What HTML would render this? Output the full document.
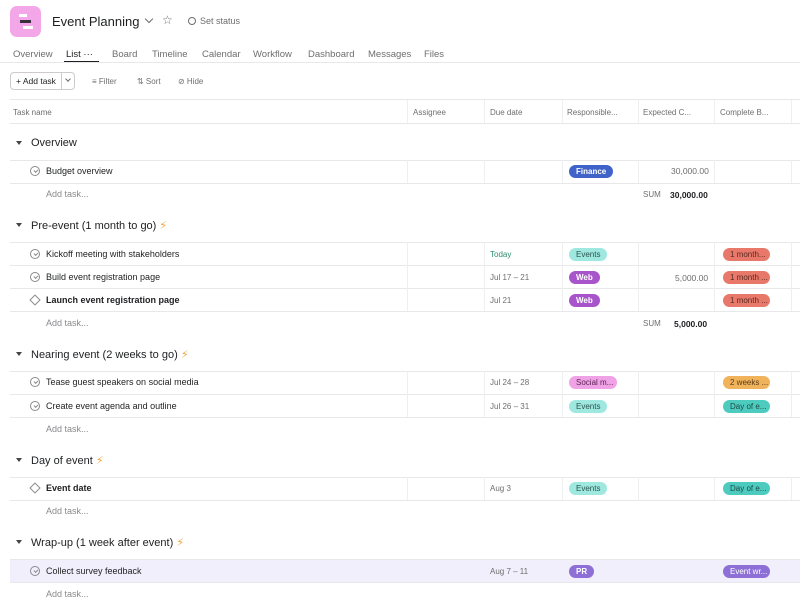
<!DOCTYPE html>
<html><head><meta charset="utf-8"><style>
*{box-sizing:border-box;margin:0;padding:0}
body{width:800px;height:600px;overflow:hidden;background:#fff;font-family:"Liberation Sans",sans-serif;color:#1e1f21;position:relative}
.a{position:absolute}
.t{font-size:9px;color:#1e1f21;white-space:nowrap}
.hl{position:absolute;height:1px;background:#e8e8ea}
.vl{position:absolute;width:1px;background:#efeff1}
.pill{position:absolute;height:13px;border-radius:7px;font-size:8px;line-height:13px;padding:0 7px;white-space:nowrap;font-weight:bold}
.chk{position:absolute;width:10px;height:10px;border:1px solid #8a8a8e;border-radius:50%}
.chk:after{content:"";position:absolute;left:2.5px;top:2px;width:3px;height:2px;border-left:1px solid #8a8a8e;border-bottom:1px solid #8a8a8e;transform:rotate(-45deg)}
.dia{position:absolute;width:8px;height:8px;border:1px solid #8a8a8e;transform:rotate(45deg)}
.sec{position:absolute;left:31px;font-size:11px;color:#1e1f21}
.tri{position:absolute;left:16px;width:0;height:0;border-left:3.5px solid transparent;border-right:3.5px solid transparent;border-top:4px solid #444}
.add{position:absolute;left:46px;font-size:9px;color:#8a8a8e}
.bolt{color:#f1a33b;font-size:11px;font-family:"DejaVu Sans",sans-serif}
.g{color:#6d6e6f}
</style></head><body>
<div class="a" style="left:10px;top:6px;width:31px;height:31px;border-radius:7px;background:#f4a7e8"></div>
<div class="a" style="left:19px;top:14px;width:8px;height:3px;background:#fff"></div>
<div class="a" style="left:20px;top:20px;width:11px;height:3px;background:#3a2f3d"></div>
<div class="a" style="left:23px;top:26px;width:10px;height:3px;background:#fff"></div>
<div class="a" style="left:52px;top:14px;font-size:13px">Event Planning</div>
<div class="a g" style="left:146px;top:16px;width:6px;height:6px;border-right:1px solid #6d6e6f;border-bottom:1px solid #6d6e6f;transform:rotate(45deg)"></div>
<div class="a g" style="left:162px;top:13px;font-size:12px;font-family:'DejaVu Sans',sans-serif">☆</div>
<div class="a" style="left:188px;top:17px;width:8px;height:8px;border:1px solid #6d6e6f;border-radius:50%"></div>
<div class="a g" style="left:200px;top:16px;font-size:9px">Set status</div>
<div class="a t g" style="left:13px;top:49px;font-size:9.5px">Overview</div>
<div class="a t" style="left:66px;top:49px;font-size:9.5px">List ···</div>
<div class="a" style="left:64px;top:61px;width:35px;height:1.5px;background:#1e1f21"></div>
<div class="a t g" style="left:112px;top:49px;font-size:9.5px">Board</div>
<div class="a t g" style="left:152px;top:49px;font-size:9.5px">Timeline</div>
<div class="a t g" style="left:202px;top:49px;font-size:9.5px">Calendar</div>
<div class="a t g" style="left:253px;top:49px;font-size:9.5px">Workflow</div>
<div class="a t g" style="left:308px;top:49px;font-size:9.5px">Dashboard</div>
<div class="a t g" style="left:368px;top:49px;font-size:9.5px">Messages</div>
<div class="a t g" style="left:424px;top:49px;font-size:9.5px">Files</div>
<div class="hl" style="left:0;top:62px;width:800px"></div>
<div class="a" style="left:10px;top:72px;width:65px;height:18px;border:1px solid #cfcbcb;border-radius:4px"></div>
<div class="vl" style="left:61px;top:73px;height:16px;background:#cfcbcb"></div>
<div class="a t" style="left:16px;top:76px;font-size:8.5px">+ Add task</div>
<div class="a" style="left:66px;top:77px;width:4px;height:4px;border-right:1px solid #6d6e6f;border-bottom:1px solid #6d6e6f;transform:rotate(45deg)"></div>
<div class="a t g" style="left:92px;top:77px;font-size:8px">≡ Filter</div>
<div class="a t g" style="left:137px;top:77px;font-size:8px">⇅ Sort</div>
<div class="a t g" style="left:178px;top:77px;font-size:8px">⊘ Hide</div>
<div class="hl" style="left:10px;top:99px;width:790px"></div>
<div class="hl" style="left:10px;top:123px;width:790px"></div>
<div class="a t g" style="left:13px;top:108px;font-size:8px">Task name</div>
<div class="a t g" style="left:413px;top:108px;font-size:8px">Assignee</div>
<div class="a t g" style="left:490px;top:108px;font-size:8px">Due date</div>
<div class="a t g" style="left:567px;top:108px;font-size:8px">Responsible...</div>
<div class="a t g" style="left:643px;top:108px;font-size:8px">Expected C...</div>
<div class="a t g" style="left:720px;top:108px;font-size:8px">Complete B...</div>
<div class="vl" style="left:407px;top:100px;height:23px"></div><div class="vl" style="left:484px;top:100px;height:23px"></div><div class="vl" style="left:562px;top:100px;height:23px"></div><div class="vl" style="left:638px;top:100px;height:23px"></div><div class="vl" style="left:714px;top:100px;height:23px"></div><div class="vl" style="left:791px;top:100px;height:23px"></div>

<div class="tri" style="top:141px"></div><div class="sec" style="top:137px">Overview</div>
<div class="tri" style="top:223px"></div><div class="sec" style="top:219px">Pre-event (1 month to go) <span class="bolt">⚡</span></div>
<div class="tri" style="top:352px"></div><div class="sec" style="top:348px">Nearing event (2 weeks to go) <span class="bolt">⚡</span></div>
<div class="tri" style="top:458px"></div><div class="sec" style="top:454px">Day of event <span class="bolt">⚡</span></div>
<div class="tri" style="top:540px"></div><div class="sec" style="top:536px">Wrap-up (1 week after event) <span class="bolt">⚡</span></div>

<div class="a" style="left:10px;top:559px;width:790px;height:23px;background:#f1effb"></div>

<div class="hl" style="left:10px;top:160px;width:790px"></div><div class="hl" style="left:10px;top:183px;width:790px"></div>
<div class="hl" style="left:10px;top:242px;width:790px"></div><div class="hl" style="left:10px;top:265px;width:790px"></div><div class="hl" style="left:10px;top:288px;width:790px"></div><div class="hl" style="left:10px;top:311px;width:790px"></div>
<div class="hl" style="left:10px;top:371px;width:790px"></div><div class="hl" style="left:10px;top:394px;width:790px"></div><div class="hl" style="left:10px;top:417px;width:790px"></div>
<div class="hl" style="left:10px;top:477px;width:790px"></div><div class="hl" style="left:10px;top:500px;width:790px"></div>
<div class="hl" style="left:10px;top:559px;width:790px"></div><div class="hl" style="left:10px;top:582px;width:790px"></div>

<div class="vl" style="left:407px;top:160px;height:23px"></div><div class="vl" style="left:484px;top:160px;height:23px"></div><div class="vl" style="left:562px;top:160px;height:23px"></div><div class="vl" style="left:638px;top:160px;height:23px"></div><div class="vl" style="left:714px;top:160px;height:23px"></div><div class="vl" style="left:791px;top:160px;height:23px"></div>
<div class="vl" style="left:407px;top:242px;height:69px"></div><div class="vl" style="left:484px;top:242px;height:69px"></div><div class="vl" style="left:562px;top:242px;height:69px"></div><div class="vl" style="left:638px;top:242px;height:69px"></div><div class="vl" style="left:714px;top:242px;height:69px"></div><div class="vl" style="left:791px;top:242px;height:69px"></div>
<div class="vl" style="left:407px;top:371px;height:46px"></div><div class="vl" style="left:484px;top:371px;height:46px"></div><div class="vl" style="left:562px;top:371px;height:46px"></div><div class="vl" style="left:638px;top:371px;height:46px"></div><div class="vl" style="left:714px;top:371px;height:46px"></div><div class="vl" style="left:791px;top:371px;height:46px"></div>
<div class="vl" style="left:407px;top:477px;height:23px"></div><div class="vl" style="left:484px;top:477px;height:23px"></div><div class="vl" style="left:562px;top:477px;height:23px"></div><div class="vl" style="left:638px;top:477px;height:23px"></div><div class="vl" style="left:714px;top:477px;height:23px"></div><div class="vl" style="left:791px;top:477px;height:23px"></div>

<div class="chk" style="left:30px;top:166px"></div><div class="a t" style="left:46px;top:166px">Budget overview</div>
<div class="add" style="top:189px">Add task...</div>
<div class="pill" style="left:569px;top:165px;background:#3f63c8;color:#fff">Finance</div>
<div class="a t g" style="left:671px;top:166px;font-size:8.5px">30,000.00</div>
<div class="a t g" style="left:643px;top:190px;font-size:8px">SUM</div>
<div class="a t" style="left:670px;top:190px;font-size:8.5px;font-weight:bold">30,000.00</div>

<div class="chk" style="left:30px;top:249px"></div><div class="a t" style="left:46px;top:249px">Kickoff meeting with stakeholders</div>
<div class="chk" style="left:30px;top:272px"></div><div class="a t" style="left:46px;top:272px">Build event registration page</div>
<div class="dia" style="left:31px;top:296px"></div><div class="a t" style="left:46px;top:295px;font-weight:bold">Launch event registration page</div>
<div class="add" style="top:318px">Add task...</div>
<div class="a t" style="left:490px;top:250px;font-size:8px;color:#2e8f6f">Today</div>
<div class="a t g" style="left:490px;top:273px;font-size:8px">Jul 17 – 21</div>
<div class="a t g" style="left:490px;top:296px;font-size:8px">Jul 21</div>
<div class="pill" style="left:569px;top:248px;background:#9ee8e0;color:#2b5550;font-weight:normal">Events</div>
<div class="pill" style="left:569px;top:271px;background:#a855cc;color:#fff">Web</div>
<div class="pill" style="left:569px;top:294px;background:#a855cc;color:#fff">Web</div>
<div class="a t g" style="left:675px;top:273px;font-size:8.5px">5,000.00</div>
<div class="pill" style="left:723px;top:248px;width:47px;background:#e8786a;color:#5a2a22;font-weight:normal">1 month...</div>
<div class="pill" style="left:723px;top:271px;width:47px;background:#e8786a;color:#5a2a22;font-weight:normal">1 month ...</div>
<div class="pill" style="left:723px;top:294px;width:47px;background:#e8786a;color:#5a2a22;font-weight:normal">1 month ...</div>
<div class="a t g" style="left:643px;top:319px;font-size:8px">SUM</div>
<div class="a t" style="left:674px;top:319px;font-size:8.5px;font-weight:bold">5,000.00</div>

<div class="chk" style="left:30px;top:377px"></div><div class="a t" style="left:46px;top:377px">Tease guest speakers on social media</div>
<div class="chk" style="left:30px;top:401px"></div><div class="a t" style="left:46px;top:401px">Create event agenda and outline</div>
<div class="add" style="top:424px">Add task...</div>
<div class="a t g" style="left:490px;top:378px;font-size:8px">Jul 24 – 28</div>
<div class="a t g" style="left:490px;top:402px;font-size:8px">Jul 26 – 31</div>
<div class="pill" style="left:569px;top:376px;width:48px;background:#f0a2e6;color:#5a2550;font-weight:normal">Social m...</div>
<div class="pill" style="left:569px;top:400px;background:#9ee8e0;color:#2b5550;font-weight:normal">Events</div>
<div class="pill" style="left:723px;top:376px;width:47px;background:#f0b35c;color:#5a3d15;font-weight:normal">2 weeks ...</div>
<div class="pill" style="left:723px;top:400px;width:47px;background:#4ecbbf;color:#1e4a45;font-weight:normal">Day of e...</div>

<div class="dia" style="left:31px;top:484px"></div><div class="a t" style="left:46px;top:483px;font-weight:bold">Event date</div>
<div class="add" style="top:506px">Add task...</div>
<div class="a t g" style="left:490px;top:484px;font-size:8px">Aug 3</div>
<div class="pill" style="left:569px;top:482px;background:#9ee8e0;color:#2b5550;font-weight:normal">Events</div>
<div class="pill" style="left:723px;top:482px;width:47px;background:#4ecbbf;color:#1e4a45;font-weight:normal">Day of e...</div>

<div class="chk" style="left:30px;top:566px"></div><div class="a t" style="left:46px;top:566px">Collect survey feedback</div>
<div class="add" style="top:589px">Add task...</div>
<div class="a t g" style="left:490px;top:567px;font-size:8px">Aug 7 – 11</div>
<div class="pill" style="left:569px;top:565px;background:#8d6fd6;color:#fff">PR</div>
<div class="pill" style="left:723px;top:565px;width:47px;background:#8d6fd6;color:#fff;font-weight:normal">Event wr...</div>
</body></html>
